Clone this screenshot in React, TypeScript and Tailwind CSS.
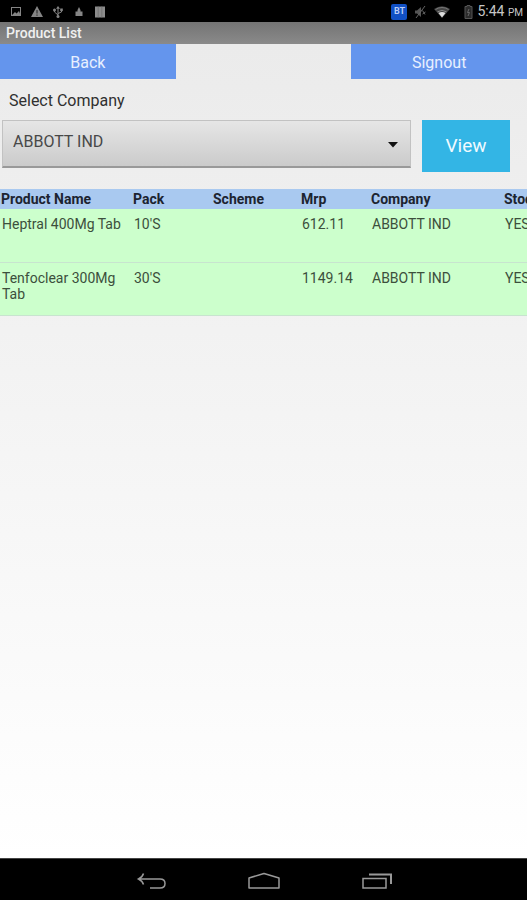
import React from 'react';

const columns = [
  { title: 'Product Name', width: 'w-[132px]' },
  { title: 'Pack', width: 'w-[80px]' },
  { title: 'Scheme', width: 'w-[88px]' },
  { title: 'Mrp', width: 'w-[70px]' },
  { title: 'Company', width: 'w-[133px]' },
  { title: 'Stock', width: 'w-[80px]' }
];

const products = [
  { name: 'Heptral 400Mg Tab', pack: "10'S", scheme: '', mrp: '612.11', company: 'ABBOTT IND', stock: 'YES' },
  { name: 'Tenfoclear 300Mg Tab', pack: "30'S", scheme: '', mrp: '1149.14', company: 'ABBOTT IND', stock: 'YES' }
];

const StatusBar = () => {
  return (
    <div className="flex h-[22px] items-center justify-between bg-black pt-px pl-[10px] pr-1 text-[#858585]">
      <div className="flex items-center gap-[9px]">
        <svg className="h-3 w-3" viewBox="0 0 12 12" fill="none" stroke="currentColor">
          <rect x="1.5" y="1.5" width="9" height="8" />
          <path d="M2 9 5 6l1.5 1.5L9 5l1.5 4z" fill="currentColor" stroke="none" />
        </svg>
        <svg className="h-3 w-3" viewBox="0 0 12 12" fill="currentColor">
          <path d="M6 0 12 11H0z" />
          <path d="M5.5 4h1v3.5h-1zM5.5 8.5h1v1.2h-1z" fill="#222" />
        </svg>
        <svg className="h-3 w-3" viewBox="0 0 12 12" fill="none" stroke="currentColor">
          <path d="M6 11V2M6 9 2.5 6V4M6 7.5 9.5 6V3.5" />
          <path d="M6 0 4 2.8h4z" fill="currentColor" stroke="none" />
          <circle cx="2.5" cy="4" r="1.5" fill="currentColor" stroke="none" />
          <rect x="8.2" y="2.5" width="2.6" height="2.6" fill="currentColor" stroke="none" />
          <circle cx="6" cy="10.5" r="1.5" fill="currentColor" stroke="none" />
        </svg>
        <svg className="h-3 w-3" viewBox="0 0 12 12" fill="currentColor">
          <path d="M6 1 7.5 4v1.5h2V10h-7V5.5h2V4z" />
        </svg>
        <svg className="h-3 w-3" viewBox="0 0 12 12" fill="#8c8c8c">
          <path d="M1 .5h10v11H1z" />
          <path d="M4.2 .5v11M7.8 .5v11" stroke="#707070" strokeWidth=".8" />
        </svg>
      </div>
      <div className="flex items-center">
        <span className="mr-[7px] flex h-4 w-4 items-center justify-center rounded-xs bg-[#1150c4] text-[9px] font-bold text-[#b9cdf5]">BT</span>
        <svg className="mr-2 h-[14px] w-3" viewBox="0 0 12 14" fill="none" stroke="#666">
          <path d="M1 5.5h2L7 2v10L3 8.5H1z" fill="#555" stroke="none" />
          <path d="M11 1 2 13M8.5 5.5l2.5 4M8.5 9l3-2" />
        </svg>
        <svg className="mr-[14px] h-3 w-4" viewBox="0 0 16 12">
          <path d="M0 3Q8-2.5 16 3L8 12z" fill="#444" />
          <path d="M1.5 3.5Q8-.5 14.5 3.5" fill="none" stroke="#777" />
          <path d="M3.5 5.8Q8 3 12.5 5.8" fill="none" stroke="#888" />
          <path d="M4.5 7Q8 5 11.5 7L8 11.5z" fill="#ddd" />
        </svg>
        <svg className="mr-1 h-[14px] w-[9px]" viewBox="0 0 9 14" fill="none" stroke="#555">
          <path d="M3 1.5V.5h3v1h2v12H1v-12z" fill="#2b2b2b" />
          <path d="M5 4 3.5 7.5h2L4 11" stroke="#666" />
        </svg>
        <span className="text-[14px] leading-4 text-[#c6c6c6]">5:44 <span className="text-[10px]">PM</span></span>
      </div>
    </div>
  );
};

const ProductTable = () => {
  return (
    <div className="mt-[17px] overflow-x-auto [scrollbar-width:none]">
      <table className="w-[583px] table-fixed border-collapse text-left text-[14px] leading-4">
        <thead>
          <tr className="h-5 bg-[#a9c9f0] text-[#1c2430]">
            {columns.map((column) => (
              <th key={column.title} className={`${column.width} p-0 pl-px font-bold`}>{column.title}</th>
            ))}
          </tr>
        </thead>
        <tbody>
          {products.map((product) => (
            <tr key={product.name} className="h-[53px] border-b border-[#c8e4cf] bg-[#ccffcc] align-top text-[#3c4f3c]">
              <td className="p-0 pt-[7px] pl-0.5">{product.name}</td>
              <td className="p-0 pt-[7px] pl-0.5">{product.pack}</td>
              <td className="p-0 pt-[7px] pl-0.5">{product.scheme}</td>
              <td className="p-0 pt-[7px] pl-0.5">{product.mrp}</td>
              <td className="p-0 pt-[7px] pl-0.5">{product.company}</td>
              <td className="p-0 pt-[7px] pl-0.5">{product.stock}</td>
            </tr>
          ))}
        </tbody>
      </table>
    </div>
  );
};

const NavBar = () => {
  return (
    <nav className="flex h-[42px] items-center justify-center gap-20 border-t border-[#444] bg-black pt-1 text-[#999]">
      <button type="button" aria-label="Go back">
        <svg className="h-5 w-8" viewBox="0 0 32 20" fill="none" stroke="currentColor" strokeWidth="1.5">
          <path d="M7.5 1.5Q6.500 5 2.500 7Q6.500 9 7.5 12.500M2.500 7H24q5 0 5 4.500T24 16H14" />
        </svg>
      </button>
      <button type="button" aria-label="Home">
        <svg className="h-5 w-8" viewBox="0 0 32 20" fill="none" stroke="currentColor" strokeWidth="1.5">
          <path d="M1 6 16 1.5 31 6v10H1z" strokeLinejoin="round" />
        </svg>
      </button>
      <button type="button" aria-label="Recent apps">
        <svg className="h-5 w-8" viewBox="0 0 32 20" fill="none" stroke="currentColor" strokeWidth="1.5">
          <path d="M3 6.5h23V16H3z" />
          <path d="M9 2.5h22V12" strokeWidth="2" />
        </svg>
      </button>
    </nav>
  );
};

const App = () => {
  return (
    <div className="flex min-h-screen flex-col font-[Roboto,sans-serif]">
      <StatusBar />
      <h1 className="h-[22px] bg-linear-to-b from-[#747474] to-[#8a8a8a] pl-1.5 text-[14px] leading-[23px] font-medium text-[#f0f0f0]">Product List</h1>

      <main className="flex-1 bg-linear-to-b from-[#ebebeb] to-white">
        <div className="grid h-[35px] grid-cols-3 text-[16px] text-[#e8f0ff]">
          <button type="button" className="bg-[#6495ed] pt-0.5">Back</button>
          <button type="button" className="col-start-3 bg-[#6495ed] pt-0.5">Signout</button>
        </div>

        <label htmlFor="company" className="mt-3 block pl-[9px] text-[16px] leading-5 text-[#303030]">Select Company</label>

        <div className="mt-[9px] flex items-start gap-[11px] pr-[17px] pl-0.5">
          <div className="relative flex-1">
            <select
              id="company"
              className="h-12 w-full appearance-none border border-[#c2c2c2] border-b-2 border-b-[#999] bg-linear-to-b from-[#e6e6e6] to-[#cbcbcb] pb-1 pl-[10px] text-[16px] text-[#484848]"
            >
              <option>ABBOTT IND</option>
            </select>
            <svg className="pointer-events-none absolute top-[22px] right-[13px] h-[6px] w-[10px]" viewBox="0 0 10 6">
              <path d="M0 0h10L5 5.5z" fill="#111" />
            </svg>
          </div>
          <button type="button" className="h-[52px] w-[88px] bg-[#33b5e5] text-[19px] text-[#f0faff]">View</button>
        </div>

        <ProductTable />
      </main>

      <NavBar />
    </div>
  );
};

export default App;
